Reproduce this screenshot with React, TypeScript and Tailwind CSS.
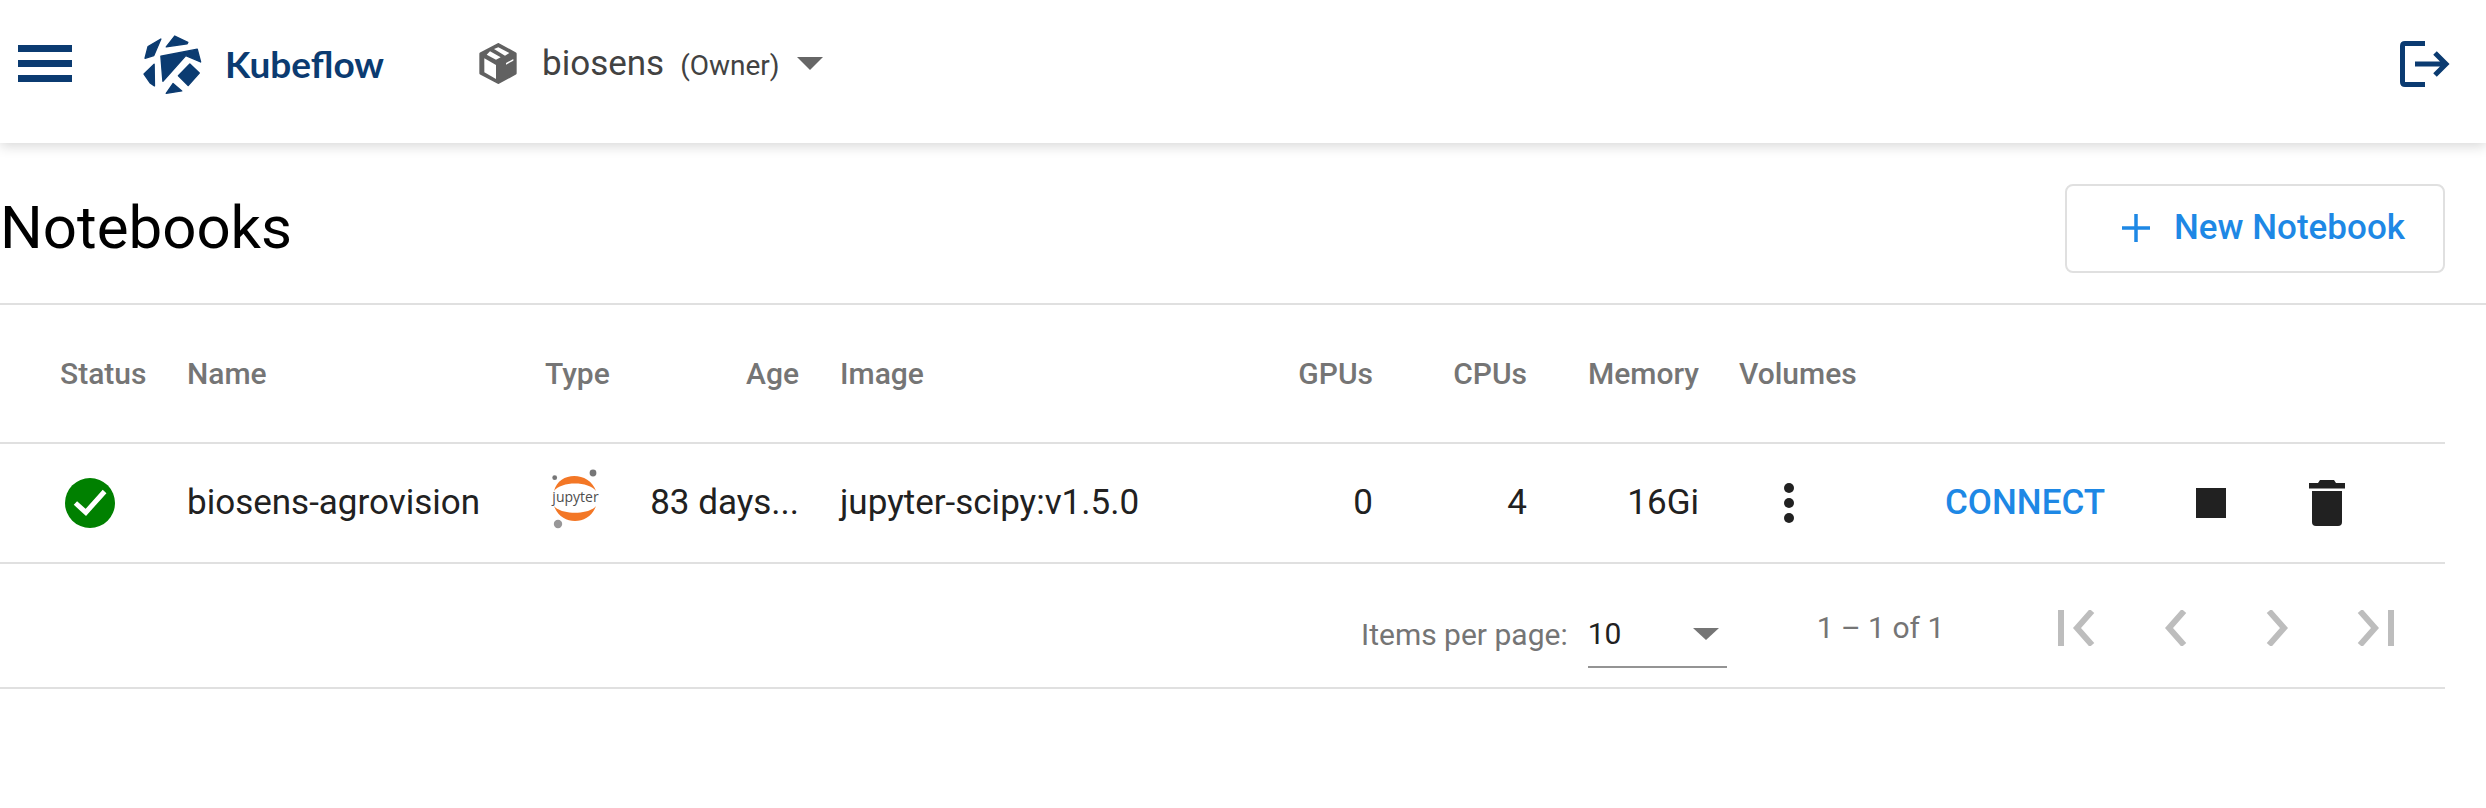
const roboto = "font-['Roboto',sans-serif]";

const KubeflowLogo = () => (
  <svg width="64" height="64" viewBox="60 30 190 190" className="shrink-0">
    <g fill="#0b3b71" stroke="#0b3b71" strokeWidth="4" strokeLinejoin="round">
      <path d="M72 108 L81 73 L119 51 L98 100 Z" />
      <path d="M135 74 L160 42 L199 61 L197 65 Z" />
      <path d="M119 102 L227 81 L237 119 L193 100 L125 176 Z" />
      <path d="M205 125 L233 152 L200 189 L171 160 Z" />
      <path d="M99 126 L100 190 L87 181 L69 155 Z" />
      <path d="M155 183 L181 205 L135 212 Z" />
    </g>
  </svg>
);

const PackageIcon = () => (
  <svg width="38" height="41" viewBox="28 37 112 123" className="shrink-0">
    <path d="M85 41 L136 69 V128 L85 156 L32 128 V69 Z" fill="#616161" stroke="#616161" strokeWidth="8" strokeLinejoin="round" />
    <path d="M43 83 L78 103 V145 L43 125 Z" fill="#fff" />
    <path d="M50 72 L60 62 L92 80 L78 87 Z M72 55 L85 50 L118 67 L105 75 Z M108 97 L130 85 V90 L108 102 Z" fill="#fff" />
  </svg>
);

const LogoutIcon = () => (
  <svg width="50" height="46" viewBox="0 0 50 46" className="shrink-0">
    <path d="M25 2.5 H5 Q2.5 2.5 2.5 5 V41 Q2.5 43.5 5 43.5 H25" fill="none" stroke="#0b3b71" strokeWidth="5" />
    <path d="M15 23 H45 M35 12 L46 23 L35 34" fill="none" stroke="#0b3b71" strokeWidth="5" />
  </svg>
);

const StatusIcon = () => (
  <svg width="50" height="50" viewBox="0 0 24 24">
    <circle cx="12" cy="12" r="12" fill="#008000" />
    <path d="M5 12 L10 16.5 L19 6.5" fill="none" stroke="#fff" strokeWidth="2.4" />
  </svg>
);

const JupyterLogo = () => (
  <svg width="52" height="72" viewBox="0 0 52 72" className="mt-[3px] shrink-0">
    <circle cx="3.7" cy="8.7" r="2.4" fill="#767677" />
    <circle cx="42" cy="4" r="3.4" fill="#767677" />
    <circle cx="7" cy="55" r="4.2" fill="#989798" />
    <path d="M3 22 C8 2 38 2 45 22 C38 12 10 12 3 22 Z" fill="#f37726" />
    <path d="M3 37 C10 57 38 57 45 37 C38 46 10 46 3 37 Z" fill="#f37726" />
    <text x="24.5" y="32.7" textAnchor="middle" fontSize="14" fill="#4e4e4e" fontFamily="'Open Sans', sans-serif">jupyter</text>
  </svg>
);

const TrashIcon = () => (
  <svg width="36" height="46" viewBox="0 0 36 46">
    <path d="M0 3 H9 L11 0 H25 L27 3 H36 V8.5 H0 Z" fill="#212121" />
    <path d="M3 11 H33 V42 Q33 46 29 46 H7 Q3 46 3 42 Z" fill="#212121" />
  </svg>
);

const PageIcon = ({ d }: { d: string }) => (
  <svg width="38" height="36" viewBox="0 0 38 36" className="shrink-0">
    <path d={d} fill="none" stroke="#bdbdbd" strokeWidth="6" />
  </svg>
);

const headers = "text-[30px] font-medium text-[#757575]";

export default function App() {
  return (
    <div className={`${roboto} min-h-[808px] bg-white text-[#212121]`}>
      <header className="flex h-[143px] items-center justify-between pb-[16px] pl-[18px] pr-[36px] shadow-[0_3px_12px_rgba(0,0,0,0.16)]">
        <div className="flex items-center">
          <div className="flex w-[54px] flex-col gap-[8px]">
            <span className="h-[7px] bg-[#0b3b71]" />
            <span className="h-[7px] bg-[#0b3b71]" />
            <span className="h-[7px] bg-[#0b3b71]" />
          </div>
          <div className="ml-[69px] flex w-[243px] items-center">
            <KubeflowLogo />
            <span className="ml-[20px] font-['Lato',sans-serif] text-[37px] font-bold text-[#0b3b71]">Kubeflow</span>
          </div>
          <div className="ml-[95px] flex items-center">
            <PackageIcon />
            <span className="ml-[25px] mt-[2px] text-[35px] text-[#424242]">biosens</span>
            <span className="ml-[16px] mt-[5px] text-[28px] text-[#424242]">(Owner)</span>
            <span className="ml-[17px] h-0 w-0 border-x-[13px] border-t-[13px] border-x-transparent border-t-[#666]" />
          </div>
        </div>
        <LogoutIcon />
      </header>

      <div className="flex h-[160px] items-center justify-between pr-[41px] pt-[10px]">
        <h1 className="text-[60px] font-normal text-black">Notebooks</h1>
        <button className="flex h-[89px] w-[380px] items-center rounded-[8px] border-2 border-[#e0e0e0] pl-[54px]">
          <svg width="30" height="30" viewBox="0 0 30 30">
            <path d="M15 1 V29 M1 15 H29" stroke="#1e88e5" strokeWidth="3.5" />
          </svg>
          <span className="ml-[23px] text-[35px] font-medium text-[#1e88e5]">New Notebook</span>
        </button>
      </div>
      <div className="h-[2px] bg-[#e0e0e0]" />

      <div className="w-[2445px]">
        <div className={`flex h-[139px] items-center border-b-2 border-[#e0e0e0] ${headers}`}>
          <div className="w-[187px] pl-[60px]">Status</div>
          <div className="w-[358px]">Name</div>
          <div className="w-[100px]">Type</div>
          <div className="w-[195px] pr-[41px] text-right">Age</div>
          <div className="w-[450px]">Image</div>
          <div className="w-[124px] pr-[41px] text-right">GPUs</div>
          <div className="w-[154px] pr-[41px] text-right">CPUs</div>
          <div className="w-[171px] pr-[40px] text-right">Memory</div>
          <div>Volumes</div>
        </div>

        <div className="flex h-[120px] items-center border-b-2 border-[#e0e0e0] text-[35px]">
          <div className="flex w-[187px] pl-[65px]"><StatusIcon /></div>
          <div className="w-[358px]">biosens-agrovision</div>
          <div className="flex w-[100px] pl-[6px]"><JupyterLogo /></div>
          <div className="w-[195px] pr-[41px] text-right">83 days...</div>
          <div className="w-[450px]">jupyter-scipy:v1.5.0</div>
          <div className="w-[124px] pr-[41px] text-right">0</div>
          <div className="w-[154px] pr-[41px] text-right">4</div>
          <div className="w-[171px] pr-[40px] text-right">16Gi</div>
          <div className="flex w-[206px] flex-col gap-[5px] pl-[45px]">
            <span className="size-[10px] rounded-full bg-[#212121]" />
            <span className="size-[10px] rounded-full bg-[#212121]" />
            <span className="size-[10px] rounded-full bg-[#212121]" />
          </div>
          <div className="w-[251px] text-[35px] font-medium text-[#1e88e5]">CONNECT</div>
          <div className="mr-[83px] size-[30px] bg-[#212121]" />
          <TrashIcon />
        </div>

        <div className="flex h-[125px] items-center border-b-2 border-[#e0e0e0] pt-[4px] text-[#757575]">
          <span className="ml-[1361px] mt-[14px] text-[30px]">Items per page:</span>
          <div className="ml-[20px] flex h-[80px] w-[139px] items-center justify-between border-b-2 border-[#949494] pr-[8px] pt-[14px]">
            <span className="text-[30px] text-[#212121]">10</span>
            <span className="h-0 w-0 border-x-[13px] border-t-[12px] border-x-transparent border-t-[#757575]" />
          </div>
          <span className="ml-[90px] text-[30px]">1 – 1 of 1</span>
          <div className="ml-[114px] flex items-center">
            <PageIcon d="M3 0 V36 M34 1 L19 18 L34 35" />
            <div className="ml-[69px]"><PageIcon d="M19 1 L4 18 L19 35" /></div>
            <div className="ml-[63px]"><PageIcon d="M3 1 L18 18 L3 35" /></div>
            <div className="ml-[53px]"><PageIcon d="M34 0 V36 M3 1 L18 18 L3 35" /></div>
          </div>
        </div>
      </div>
    </div>
  );
}
